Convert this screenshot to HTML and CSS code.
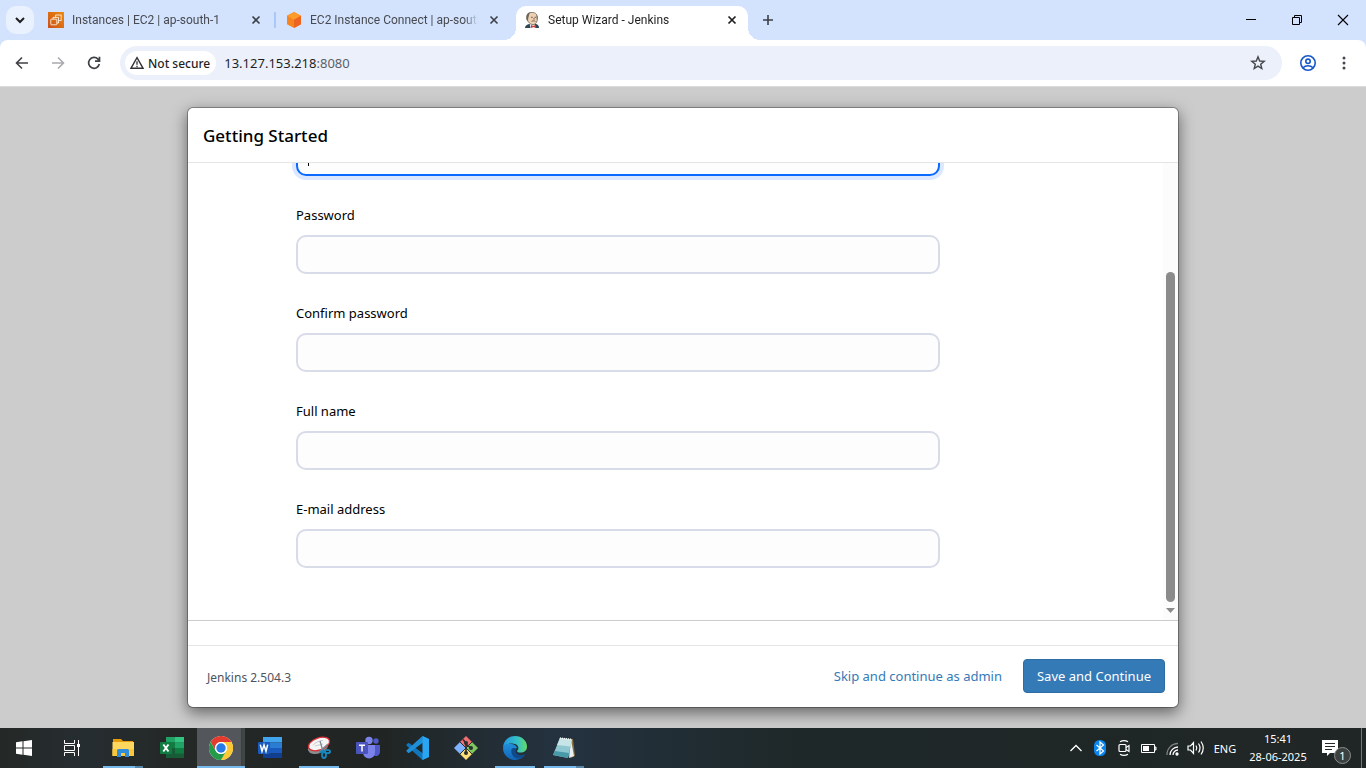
FILE: index.html
```html
<!DOCTYPE html>
<html lang="en">
<head>
<meta charset="utf-8">
<title>Setup Wizard - Jenkins</title>
<link rel="stylesheet" href="styles.css">
</head>
<body>
<header class="tabstrip">
  <button class="tab-search" aria-label="Search tabs"><svg width="12" height="12" viewBox="0 0 12 12" fill="none" stroke="#1f1f1f" stroke-width="2"><path d="M2 4l4 4 4-4"/></svg></button>
  <nav class="tabs" aria-label="Tabs">
    <div class="tab">
      <svg class="favicon" viewBox="0 0 16 16"><defs><linearGradient id="aws" x1="0" y1="1" x2="1" y2="0"><stop stop-color="#c8511b"/><stop offset="1" stop-color="#f08a0c"/></linearGradient></defs><path fill="url(#aws)" d="M0 0h16v16H0z"/><g fill="none" stroke="#fff" stroke-width=".8"><rect x="2.800" y="7.200" width="6" height="5.600" rx=".5"/><path d="M5 7V5.400h5.500V11H9M7.600 5.200V3h5.600v5.600h-2.400"/></g></svg>
      <a class="tab-title" href="#">Instances | EC2 | ap-south-1</a>
      <button class="tab-close" aria-label="Close tab"><svg width="16" height="16" viewBox="0 0 16 16"><path d="M4.500 4.500l7 7m0-7l-7 7" stroke="#3c3f45" stroke-width="1.600"/></svg></button>
    </div>
    <div class="tab divided">
      <svg class="favicon" viewBox="0 0 16 16"><path d="M8 0l7 3.800v8.400L8 16l-7-3.800V3.800z" fill="#f68520"/><path d="M8 0l7 3.800L8 7.700 1 3.800z" fill="#fd9b2b"/><path d="M8 7.700l7-3.900v8.400L8 16z" fill="#ed6420"/></svg>
      <a class="tab-title" href="#">EC2 Instance Connect | ap-south</a>
      <button class="tab-close" aria-label="Close tab"><svg width="16" height="16" viewBox="0 0 16 16"><path d="M4.500 4.500l7 7m0-7l-7 7" stroke="#3c3f45" stroke-width="1.600"/></svg></button>
    </div>
    <div class="tab active">
      <svg class="favicon" viewBox="0 0 16 16"><path d="M1 16c0-2 1-3 4-4l7 0c2 .6 3 2 3 4z" fill="#2d4656"/><path d="M5.500 11h5l1 5h-5z" fill="#eee"/><path d="M2.800 5C2.800 1.500 5 .3 8 .4c3.800 0 5.500 2.200 5.400 6.100 0 3.700-1.900 6.100-4.400 6.100-3.200 0-6.200-3.500-6.200-7.600z" fill="#ecd0b0" stroke="#433d38" stroke-width=".6"/><path d="M2.600 8C1.700 3.500 3.600.8 6.300.6 4.700 2.300 5.100 4.300 4.200 6.200l-.1 2.500zM12.500 3l1.100 1.400-.1 3.400-.8-.6z" fill="#6b625a"/><path d="M7 5.300h1.800M10.500 5.300H12M7.600 9.300c1.500-.8 2.600-.5 3.800.1M10 6v1.700" stroke="#59463c" stroke-width=".8" fill="none"/><path d="M7 13l2.300 1L12 12.800V16l-2.600-1L7 16z" fill="#d33833"/></svg>
      <a class="tab-title" href="#">Setup Wizard - Jenkins</a>
      <button class="tab-close" aria-label="Close tab"><svg width="16" height="16" viewBox="0 0 16 16"><path d="M4.500 4.500l7 7m0-7l-7 7" stroke="#1f1f1f" stroke-width="1.700"/></svg></button>
    </div>
  </nav>
  <button class="new-tab" aria-label="New tab"><svg width="12" height="12" viewBox="0 0 12 12"><path d="M6 1v10M1 6h10" stroke="#3c3f45" stroke-width="1.600"/></svg></button>
  <div class="window-controls">
    <button aria-label="Minimize"><svg width="12" height="12" viewBox="0 0 12 12"><path d="M1 5.500h10" stroke="#000"/></svg></button>
    <button aria-label="Restore"><svg width="12" height="12" viewBox="0 0 12 12" fill="none" stroke="#000"><path d="M1.500 3.500h7v7h-7zM3.500 3.500v-2h7v7h-2"/></svg></button>
    <button aria-label="Close"><svg width="12" height="12" viewBox="0 0 12 12"><path d="M1 1l10 10M11 1L1 11" stroke="#000" stroke-width="1.100"/></svg></button>
  </div>
</header>
<div class="toolbar-back">
<div class="toolbar">
  <button class="tool" aria-label="Back"><svg width="16" height="16" viewBox="0 0 16 16" fill="none" stroke="#3f4246" stroke-width="1.600"><path d="M14 8H3M8 2.500L2.500 8 8 13.500"/></svg></button>
  <button class="tool" aria-label="Forward" disabled><svg width="16" height="16" viewBox="0 0 16 16" fill="none" stroke="#a9abae" stroke-width="1.600"><path d="M2 8h11M8 2.500L13.500 8 8 13.500"/></svg></button>
  <button class="tool" aria-label="Reload"><svg width="16" height="16" viewBox="0 0 16 16" fill="none" stroke="#3f4246" stroke-width="1.700"><path d="M13.300 9A5.400 5.400 0 1 1 12 4.200L13.500 6M13.500 1.800V6.200H9"/></svg></button>
  <div class="omnibox">
    <button class="chip"><svg width="14" height="14" viewBox="0 0 14 14"><path d="M7 1.700L13 12.200H1z" fill="none" stroke="#303236" stroke-width="1.400"/><path d="M7 5.200v3.600M7 9.700v1.500" stroke="#303236" stroke-width="1.300"/></svg>Not secure</button>
    <a class="url" href="#">13.127.153.218<span>:8080</span></a>
    <button class="star" aria-label="Bookmark"><svg width="16" height="16" viewBox="0 0 16 16"><path d="M8 1.800l1.700 4.200 4.500.3-3.500 2.900 1.100 4.400L8 11.200l-3.800 2.400 1.100-4.400L1.800 6.300 6.300 6z" fill="none" stroke="#44474b" stroke-width="1.400"/></svg></button>
  </div>
  <button class="tool profile" aria-label="Profile"><svg width="16" height="16" viewBox="0 0 16 16" fill="none" stroke="#1757c8" stroke-width="1.600"><circle cx="8" cy="8" r="7.200"/><circle cx="8" cy="6.300" r="2.200"/><path d="M3 12.800c2.700-2.700 7.300-2.700 10 0"/></svg></button>
  <button class="tool" aria-label="Menu"><svg width="16" height="16" viewBox="0 0 16 16" fill="#44474b"><circle cx="8" cy="3" r="1.500"/><circle cx="8" cy="8" r="1.500"/><circle cx="8" cy="13" r="1.500"/></svg></button>
</div>
</div>
<main class="page">
  <section class="dialog">
    <h1 class="dialog-head">Getting Started</h1>
    <div class="dialog-body">
      <form class="form">
        <div class="field focused"><input aria-label="Username" type="text"></div>
        <div class="field"><label for="pw">Password</label><input id="pw" type="password"></div>
        <div class="field"><label for="pw2">Confirm password</label><input id="pw2" type="password"></div>
        <div class="field"><label for="name">Full name</label><input id="name" type="text"></div>
        <div class="field"><label for="mail">E-mail address</label><input id="mail" type="text"></div>
      </form>
      <div class="scrollbar"><div class="thumb"></div><svg width="9" height="5" viewBox="0 0 9 5"><path d="M0 0h9L4.500 5z" fill="#8b8b8b"/></svg></div>
    </div>
    <footer class="dialog-foot">
      <span class="version">Jenkins 2.504.3</span>
      <button class="skip">Skip and continue as admin</button>
      <button class="save">Save and Continue</button>
    </footer>
  </section>
</main>
<footer class="taskbar">
  <button class="app" aria-label="Start"><svg width="24" height="24" viewBox="0 0 24 24" fill="#fff"><path d="M4 6.200l6.500-.9v6.200H4zM11.500 5.200L20 4v7.500h-8.500zM4 12.500h6.500v6.200L4 17.800zM11.500 12.500H20V20l-8.500-1.200z"/></svg></button>
  <button class="app task-view" aria-label="Task view"><svg width="24" height="24" viewBox="0 0 24 24" fill="none" stroke="#fff"><path d="M4.500 4v3.500h10V4M4.500 20v-3.500h10V20M4.500 9.500h10v5h-10zM18.500 4v16"/><path d="M17 8h3v3h-3z" fill="#fff" stroke="none"/></svg></button>
  <button class="app open multi" aria-label="File Explorer"><svg width="24" height="24" viewBox="0 0 24 24"><path d="M2 3h8l2 2h10v3H2z" fill="#e59b0a"/><path d="M1.500 6H23v14H1.500z" fill="#ffd75e"/><path d="M1.500 13H23v7H1.500z" fill="#fbc83c"/><path d="M6 21v-6.500q0-1.500 1.500-1.500h9q1.500 0 1.500 1.500V21h-4v-4h-4v4z" fill="#2f8edb"/></svg></button>
  <button class="app" aria-label="Excel"><svg width="24" height="24" viewBox="0 0 24 24"><path d="M6 1h18v21H6z" fill="#185c37"/><path d="M6 1h9v5.500H6z" fill="#21a366"/><path d="M15 1h9v5.500h-9z" fill="#33c481"/><path d="M6 6.500h9V12H6z" fill="#107c41"/><path d="M15 6.500h9V12h-9z" fill="#21a366"/><path d="M15 12h9v5.500h-9z" fill="#107c41"/><rect y="6" width="12" height="12" rx="1" fill="#107c41"/><path d="M3.300 8.500l5.200 7M8.500 8.500l-5.200 7" stroke="#fff" stroke-width="1.900"/></svg></button>
  <button class="app open multi current" aria-label="Chrome"><svg width="24" height="24" viewBox="0 0 24 24"><circle cx="12" cy="12" r="12" fill="#fff"/><path d="M1.600 6A12 12 0 0 1 22.400 6H12a6 6 0 0 0-5.200 9z" fill="#e33b2e"/><path d="M22.400 6A12 12 0 0 1 12 24l5.200-9A6 6 0 0 0 12 6z" fill="#fcc934"/><path d="M12 24A12 12 0 0 1 1.600 6l5.200 9a6 6 0 0 0 10.400 0z" fill="#249b49"/><circle cx="12" cy="12" r="6" fill="#fff"/><circle cx="12" cy="12" r="4.700" fill="#287ae6"/></svg></button>
  <button class="app" aria-label="Word"><svg width="24" height="24" viewBox="0 0 24 24"><path d="M5 1h19v5.500H5z" fill="#41a5ee"/><path d="M5 6.500h19V12H5z" fill="#2b7cd3"/><path d="M5 12h19v5.500H5z" fill="#185abd"/><path d="M5 17.500h19V22H5z" fill="#103f91"/><rect y="6" width="12" height="12" rx="1" fill="#185abd"/><path d="M2.300 8.600L4 15.300 6 9l2 6.300 1.700-6.700" fill="none" stroke="#fff" stroke-width="1.500"/></svg></button>
  <button class="app open" aria-label="Snipping Tool"><svg width="24" height="24" viewBox="0 0 24 24"><ellipse cx="11" cy="11" rx="10.500" ry="6.500" transform="rotate(-20 11 11)" fill="#8c8f91"/><ellipse cx="12" cy="8" rx="11" ry="6" transform="rotate(-20 12 8)" fill="#f5f5f5" stroke="#d92d35" stroke-width="1.200"/><path d="M6 9.500c2-3.500 6-4.500 10-5M8 10l8-2" fill="none" stroke="#c8ccd0"/><path d="M13 5l3.200 11M21 8l-8 7" stroke="#7d8991" stroke-width="1.300"/><g fill="none" stroke="#1788bd" stroke-width="1.800"><ellipse cx="17" cy="19" rx="2" ry="3"/><ellipse cx="20.500" cy="15.500" rx="2.600" ry="1.700"/><path d="M12.500 16.500L17 14"/></g></svg></button>
  <button class="app" aria-label="Teams"><svg width="24" height="24" viewBox="0 0 24 24"><circle cx="20" cy="5" r="2.700" fill="#5059c9"/><circle cx="13" cy="4.500" r="3.700" fill="#7b83eb"/><path d="M17 9h7v7a4 4 0 0 1-6 3.500z" fill="#5059c9"/><path d="M7 9h12v7.500a6 6 0 0 1-12 0z" fill="#7b83eb"/><rect y="6" width="12" height="12" rx="1" fill="#4b53bc"/><path d="M3 9.300h6M6 9v6.500" stroke="#fff" stroke-width="1.500"/></svg></button>
  <button class="app" aria-label="Visual Studio Code"><svg width="24" height="24" viewBox="0 0 24 24"><path d="M17.500 0L24 3v18l-6.500 3-15.800-14.300q-.8-.7 0-1.400L3 7.200q.7-.5 1.400 0L18 17.500z" fill="#1276bd"/><path d="M17.500 0L18 6.500 4.400 16.800q-.7.500-1.400 0l-1.300-1.200q-.8-.7 0-1.300z" fill="#1f8fd8"/><path d="M17.500 0L24 3v18l-6.500 3z" fill="#2aa5f3"/></svg></button>
  <button class="app" aria-label="Git"><svg width="24" height="24" viewBox="0 0 24 24"><path d="M12 0l6 6-6 6-6-6z" fill="#f16f73"/><path d="M6 6l6 6-6 6-6-6z" fill="#80b3ff"/><path d="M18 6l6 6-6 6-6-6z" fill="#7fc65e"/><path d="M12 12l6 6-6 6-6-6z" fill="#ffe079"/><path d="M6 6l12 12M18 6L6 18" stroke="#29302f"/><path d="M9 3.500l3 3.500v10M12 8l5 4" stroke="#29302f" stroke-width="1.600" fill="none"/><g fill="#29302f"><circle cx="12" cy="7" r="2"/><circle cx="17" cy="12" r="2"/><circle cx="12" cy="17" r="2"/></g></svg></button>
  <button class="app open" aria-label="Edge"><svg width="24" height="24" viewBox="0 0 24 24"><defs><linearGradient id="e1"><stop stop-color="#2294df"/><stop offset=".6" stop-color="#35c1c7"/><stop offset="1" stop-color="#65da68"/></linearGradient><linearGradient id="e2" x2="0" y2="1"><stop stop-color="#2090dd"/><stop offset="1" stop-color="#1262b5"/></linearGradient></defs><path d="M0 11.500C.5 4.500 5.500 0 12 0c7 0 12 5 12 10.500 0 4-3 6-6.500 6-3 0-4-1-3-2.200C17 11 14 7.800 9.500 7.600 5 7.400 1 9 0 11.500z" fill="url(#e1)"/><path d="M0 12C.7 8.800 4.500 7.400 8.500 8c3 .4 5.300 2.200 5.600 4-5 .5-5.500 6 .5 7.500 3 .8 5.400.1 7.400-1.200-2 3.700-5.700 5.700-9.700 5.700C5.200 24 0 18.500 0 12z" fill="url(#e2)"/><path d="M8.300 15c0 5 4.500 8.500 9.200 7.300 2-.9 3.500-2.200 4.500-4-5.500 3-10.500-1-9-5-1.500-2.300-4.700-1.700-4.700 1.700z" fill="#104a8a"/></svg></button>
  <button class="app open multi" aria-label="Notepad"><svg width="24" height="24" viewBox="0 0 24 24"><path d="M7 2l14 1 2 17-4 2z" fill="#8a713f"/><path d="M19 4l3 16-5 2z" fill="#e9eef0"/><path d="M8 2l12 1.500L16 22 1 19z" fill="#8fc7d1"/><path d="M8 2l12 1.500-1.500 7L5 9z" fill="#c7e4e7"/><path d="M3 15l14 2-1 5-15-3z" fill="#4899a9"/><path d="M8 2l12 1.500" stroke="#f1f5f6" stroke-width="1.500" stroke-dasharray="1 1"/></svg></button>
  <div class="tray">
    <button aria-label="Show hidden icons"><svg width="24" height="24" viewBox="0 0 24 24"><path d="M6.500 15l5.500-5.500 5.500 5.500" fill="none" stroke="#fff" stroke-width="1.300"/></svg></button>
    <button aria-label="Bluetooth"><svg width="24" height="24" viewBox="0 0 24 24"><rect x="6" y="4" width="12" height="16" rx="5.500" fill="#0a84ee"/><path d="M8.500 9l7 6-3.500 3V6l3.500 3-7 6" fill="none" stroke="#fff" stroke-width="1.200"/></svg></button>
    <button aria-label="Meet Now"><svg width="24" height="24" viewBox="0 0 24 24" fill="none" stroke="#fff" stroke-width="1.200"><rect x="7" y="8.500" width="7" height="7" rx="1"/><path d="M14 11.500l3-2v6l-3-2M8 5.800q4-2.500 8 0M8 18.200q4 2.500 8 0"/></svg></button>
    <button aria-label="Battery"><svg width="24" height="24" viewBox="0 0 24 24"><path d="M5.500 8.500h13v8h-13zM19 11h1v3h-1z" fill="none" stroke="#fff"/><path d="M7 10h6v5H7z" fill="#fff"/></svg></button>
    <button aria-label="Network"><svg width="24" height="24" viewBox="0 0 24 24" fill="none" stroke="#fff" stroke-width="1.300"><path d="M7 19A11 11 0 0 1 18 7.500" stroke="#7d8281"/><path d="M10 19a8 8 0 0 1 8-8M13 19a5 5 0 0 1 5-5"/><circle cx="17" cy="18" r="1" fill="#fff"/></svg></button>
    <button aria-label="Volume"><svg width="24" height="24" viewBox="0 0 24 24" fill="none" stroke="#fff" stroke-width="1.200"><path d="M4 10h2.500l3-3.500v11l-3-3.500H4zM12 9.500q1.500 2.500 0 5M14.500 7.500q3 4.500 0 9M17 5.500q4.500 6.500 0 13"/></svg></button>
    <button class="lang">ENG</button>
    <button class="clock"><span>15:41</span><span>28-06-2025</span></button>
    <button class="notify" aria-label="Notifications"><svg width="16" height="16" viewBox="0 0 16 16"><path d="M0 0h16v13h-8l-3 3v-3H0z" fill="#fff"/><path d="M3 3.500h10M3 6.500h10M3 9.500h7" stroke="#222927"/></svg><span class="count">1</span></button>
  </div>
</footer>
</body>
</html>
```
FILE: styles.css
```css
* { box-sizing: border-box; }
body { margin: 0; height: 100vh; display: flex; flex-direction: column; overflow: hidden; font-family: "Segoe UI", "Noto Sans", sans-serif; font-size: 13px; color: #1f1f1f; }
button { border: 0; padding: 0; background: none; font: inherit; color: inherit; display: flex; align-items: center; justify-content: center; flex: none; }
a { color: inherit; text-decoration: none; }
svg { display: block; flex: none; }

.tabstrip { display: flex; height: 40px; flex: none; background: #d3e3fd; padding-left: 6px; }
.tab-search { width: 28px; height: 28px; margin: 6px 6px 0 0; border-radius: 10px; background: #e9f0fe; }
.tabs { display: flex; padding-top: 6px; }
.tab { position: relative; width: 238px; height: 34px; display: flex; align-items: center; gap: 8px; padding: 0 14px 6px 8px; font-family: "Segoe UI", Roboto, sans-serif; font-size: 12px; color: #474a50; }
.divided::before { content: ""; position: absolute; left: -4px; top: 6px; width: 2px; height: 16px; background: #a8c7fa; }
.tab.active { width: 232px; padding-right: 8px; background: #fff; border-radius: 10px 10px 0 0; color: #1f1f1f; }
.active::before, .active::after { content: ""; position: absolute; bottom: 0; width: 12px; height: 12px; }
.active::before { right: 100%; background: radial-gradient(circle at 0 0, transparent 12px, #fff 12px); }
.active::after { left: 100%; background: radial-gradient(circle at 100% 0, transparent 12px, #fff 12px); }
.favicon { width: 16px; height: 16px; }
.tab-title { flex: 1; min-width: 0; overflow: hidden; white-space: nowrap; mask-image: linear-gradient(to right, #000 92%, transparent); }
.tab-close { width: 16px; height: 16px; }
.new-tab { width: 28px; height: 28px; margin: 6px 0 0 6px; }
.window-controls { margin-left: auto; display: flex; }
.window-controls button { width: 46px; height: 40px; }

.toolbar-back { flex: none; background: #d3e3fd; }
.toolbar { display: flex; align-items: center; height: 47px; background: #fff; border-radius: 8px 8px 0 0; border-bottom: 1px solid #dcdcdc; padding: 0 4px; }
.tool { width: 36px; height: 36px; }
.profile { margin-left: 8px; }
.omnibox { flex: 1; display: flex; align-items: center; height: 34px; margin-left: 8px; padding: 0 16px 0 5px; background: #ecf0fa; border-radius: 17px; }
.chip { height: 24px; gap: 4px; padding: 0 6px 0 5px; border-radius: 12px; background: #fff; font-size: 12px; font-weight: 500; }
.url { flex: 1; margin-left: 8px; font-size: 13px; }
.url span { color: #5b5f66; }

.page { flex: 1; min-height: 0; padding: 20px 16px; background: #ccc; display: flex; justify-content: center; }
.dialog { flex: 1; max-width: 992px; display: flex; flex-direction: column; background: #fff; background-clip: padding-box; border: 1px solid rgba(0,0,0,.3); border-radius: 6px; box-shadow: 0 5px 15px rgba(0,0,0,.5); color: #000; }
.dialog-head { flex: none; margin: 0; padding: 16px 15px 14px; border-bottom: 1px solid #e5e5e5; font-size: 17px; line-height: 24px; font-weight: 500; }
.dialog-body { flex: 1; min-height: 0; overflow: hidden; display: flex; margin-bottom: 24px; border-bottom: 1px solid #ccc; }
.form { flex: 1; display: flex; flex-direction: column; justify-content: flex-end; gap: 29px; padding: 0 223px 52px 108px; }
.field { position: relative; flex: none; display: flex; flex-direction: column; gap: 10px; line-height: 20px; }
.field input { height: 39px; width: 100%; border: 2px solid #d8dbe8; border-radius: 10px; background: #fdfdfd; padding: 8px 10px; font: inherit; outline: none; }
.focused input { border-color: #0b6aff; box-shadow: 0 0 0 4px #dbe8ff; }
.focused::after { content: ""; position: absolute; left: 12px; bottom: 10px; width: 1px; height: 18px; background: #000; }
.scrollbar { width: 15px; display: flex; flex-direction: column; align-items: center; padding: 109px 0 7px; background: #fcfcfc; gap: 6px; }
.thumb { flex: 1; width: 9px; border-radius: 5px; background: #8b8b8b; }
.dialog-foot { flex: none; display: flex; align-items: center; border-top: 1px solid #e5e5e5; padding: 13px 13px 14px 19px; }
.version { margin-right: auto; font-size: 12px; line-height: 20px; padding-top: 4px; color: #4d545d; }
.skip { color: #337ab7; margin-right: 21px; }
.save { height: 34px; padding: 0 13px; border: 1px solid #2e6da4; border-radius: 4px; background: #337ab7; color: #fff; }

.taskbar { flex: none; height: 40px; display: flex; gap: 1px; color: #fff; background: linear-gradient(90deg, #242826, #262d31 80px, #242826 180px, #202523 380px, #243240 560px, #1e2828 800px, #202625); }
.app { position: relative; width: 48px; height: 40px; }
.task-view { margin: 0 2px 0 -1px; }
.open::after { content: ""; position: absolute; left: 4px; right: 4px; bottom: 0; height: 2px; background: #76b9ed; }
.multi::after { background: linear-gradient(90deg, #76b9ed 32px, #5786a8 32px); }
.current { background: linear-gradient(90deg, #53565a 44px, #353b39 44px, #404644 45px); }
.current::after { left: 0; right: 0; background: #76b9ed; }
.tray { margin-left: auto; display: flex; align-items: center; }
.tray svg { margin: auto; }
.lang { font-size: 11px; width: 34px; }
.clock { flex-direction: column; width: 72px; font-size: 11px; line-height: 18px; }
.notify { position: relative; width: 38px; height: 40px; margin-right: 4px; border-right: 1px solid #717574; }
.tray .notify { width: 48px; }
.tray .notify svg { margin: 0 16px 0 0; }
.count { position: absolute; left: 20px; top: 19px; width: 17px; height: 17px; border: 1px solid #8b8f8e; border-radius: 50%; background: #3c4140; font-size: 11px; line-height: 15px; text-align: center; }
```
